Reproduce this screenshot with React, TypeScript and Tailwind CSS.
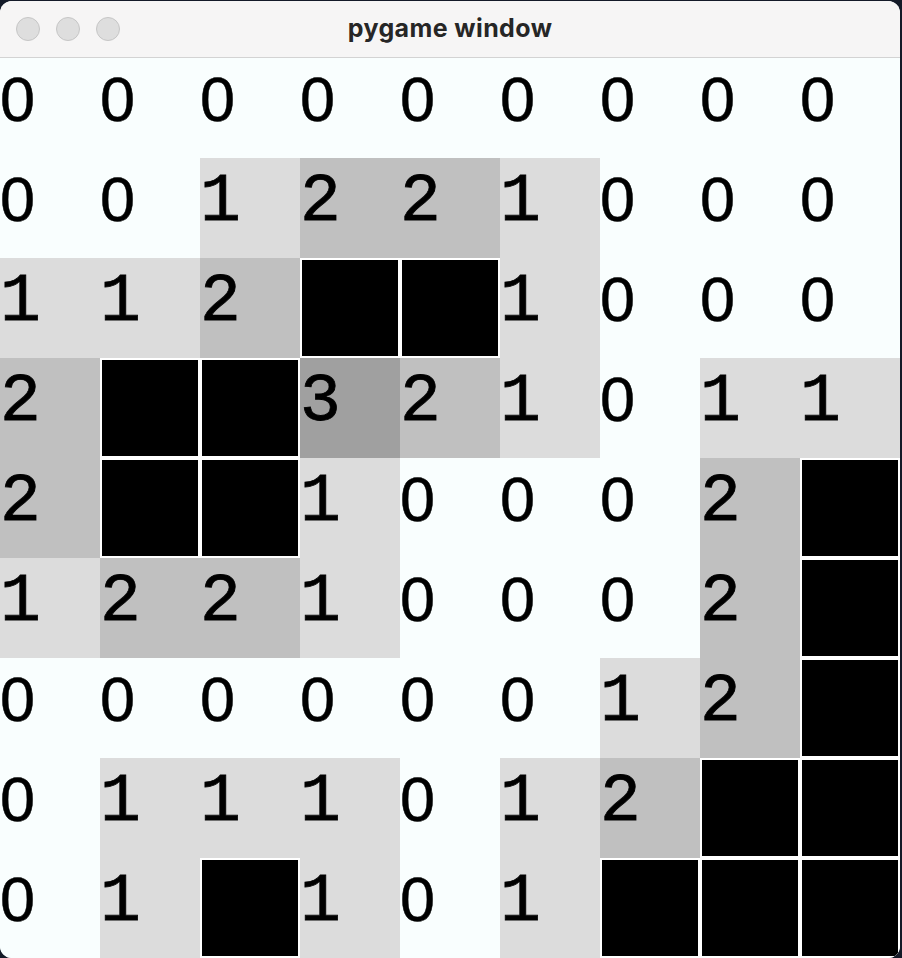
import React from "react";

// -1 marks a mine, everything else is the neighbour count
const board: number[][] = [
  [0, 0, 0, 0, 0, 0, 0, 0, 0],
  [0, 0, 1, 2, 2, 1, 0, 0, 0],
  [1, 1, 2, -1, -1, 1, 0, 0, 0],
  [2, -1, -1, 3, 2, 1, 0, 1, 1],
  [2, -1, -1, 1, 0, 0, 0, 2, -1],
  [1, 2, 2, 1, 0, 0, 0, 2, -1],
  [0, 0, 0, 0, 0, 0, 1, 2, -1],
  [0, 1, 1, 1, 0, 1, 2, -1, -1],
  [0, 1, -1, 1, 0, 1, -1, -1, -1],
];

const shade: Record<number, string> = {
  0: "bg-[#f9fefe]",
  1: "bg-[#dcdcdc]",
  2: "bg-[#c0c0c0]",
  3: "bg-[#a0a0a0]",
};

function Cell({ value }: { value: number }) {
  if (value < 0) {
    return (
      <div className="h-[100px] w-[100px] bg-white p-[2px]">
        <div className="h-full w-full bg-black" />
      </div>
    );
  }
  // the mono face draws a dotted zero, the reference one is a plain oval
  if (value === 0) {
    return (
      <div
        className={`h-[100px] w-[100px] ${shade[0]} pt-[10px] text-[63px] leading-[63px] text-black [-webkit-text-stroke:0.5px_black]`}
        style={{ fontFamily: '"Liberation Sans", sans-serif' }}
      >
        0
      </div>
    );
  }
  return (
    <div
      className={`h-[100px] w-[100px] ${shade[value]} pt-[10px] text-[68px] leading-[68px] text-black [-webkit-text-stroke:0.8px_black]`}
      style={{ fontFamily: '"Liberation Mono", monospace' }}
    >
      {value}
    </div>
  );
}

function TitleBar() {
  return (
    <div className="relative flex h-[57px] items-center border-b border-[#d3d3d3] bg-[#f6f5f5]">
      <div className="flex gap-[16px] pl-[16px]">
        <span className="h-[24px] w-[24px] rounded-full border border-[#c6c6c6] bg-[#dedede]" />
        <span className="h-[24px] w-[24px] rounded-full border border-[#c6c6c6] bg-[#dedede]" />
        <span className="h-[24px] w-[24px] rounded-full border border-[#c6c6c6] bg-[#dedede]" />
      </div>
      <div
        className="absolute inset-0 flex items-center justify-center text-[25px] font-bold tracking-[0.4px] text-[#262626]"
        style={{ fontFamily: "Inter, sans-serif" }}
      >
        pygame window
      </div>
    </div>
  );
}

export default function App() {
  return (
    <div className="h-[958px] w-[902px] overflow-hidden bg-[#141a28] pt-[1px]">
      <div className="h-[957px] w-[900px] overflow-hidden rounded-[12px] bg-[#f9fefe]">
        <TitleBar />
        <div className="grid grid-cols-9">
          {board.flatMap((row, r) =>
            row.map((v, c) => <Cell key={`${r}-${c}`} value={v} />)
          )}
        </div>
      </div>
    </div>
  );
}
